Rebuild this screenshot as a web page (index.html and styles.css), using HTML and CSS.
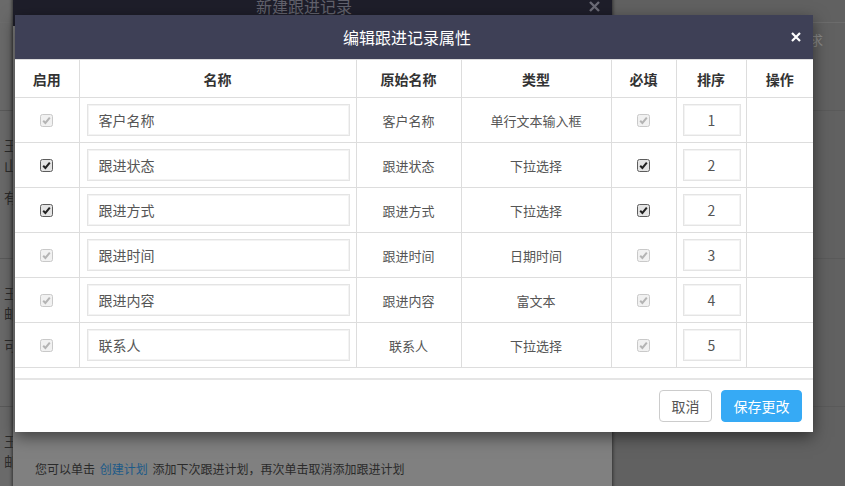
FILE: index.html
```html
<!DOCTYPE html>
<html lang="zh-CN">
<head>
    <meta charset="UTF-8">
    <meta name="viewport" content="width=device-width, initial-scale=1.0">
    <title>编辑跟进记录属性</title>
    <link rel="stylesheet" href="styles.css">
</head>
<body>
  <svg width="0" height="0" class="defs">
    <defs>
      <g id="cb-off">
        <rect x="0.5" y="0.5" width="12" height="12" rx="2" fill="#f1f1f1" stroke="#c9c9c9"/>
        <path d="M3.2 6.8 L5.4 9 L9.8 3.6" fill="none" stroke="#b4b4b4" stroke-width="2"/>
      </g>
      <g id="cb-on">
        <rect x="0.5" y="0.5" width="12" height="12" rx="2" fill="#e4e4e4" stroke="#5d5d5d"/>
        <path d="M3.2 6.8 L5.4 9 L9.8 3.6" fill="none" stroke="#222" stroke-width="2"/>
      </g>
    </defs>
  </svg>

  <!-- page behind the dialogs -->
  <div class="page">
    <div class="page-head"></div>
    <div class="page-form"><span class="hint">需求</span></div>
    <div class="record">
      <p>王总</p>
      <p>山东</p>
      <p class="gap">有意</p>
    </div>
    <div class="record">
      <p>王姐</p>
      <p>邮箱</p>
      <p class="gap">可以</p>
    </div>
    <div class="record">
      <p>王总</p>
      <p>邮箱</p>
    </div>
  </div>

  <!-- first dialog -->
  <div class="bg-modal">
    <div class="bg-modal-header">
      <span class="bg-title">新建跟进记录</span>
      <svg class="x-icon" width="11" height="11" viewBox="0 0 11 11"><path d="M1 1 L10 10 M10 1 L1 10" stroke="#6b6b77" stroke-width="2.4"/></svg>
    </div>
    <div class="bg-modal-body">
      <p class="tip">您可以单击 <a class="tip-link">创建计划</a> 添加下次跟进计划，再次单击取消添加跟进计划</p>
    </div>
  </div>

  <!-- edit dialog -->
  <div class="modal">
    <div class="modal-header">
      <span class="modal-title">编辑跟进记录属性</span>
      <svg class="x-icon" width="10" height="10" viewBox="0 0 10 10"><path d="M1 1 L9 9 M9 1 L1 9" stroke="#fff" stroke-width="2.2"/></svg>
    </div>
    <div class="modal-body">
      <table class="prop-table">
        <colgroup>
          <col style="width:64px"><col style="width:277px"><col style="width:105px"><col style="width:150px"><col style="width:65px"><col style="width:70px"><col>
        </colgroup>
        <thead>
          <tr><th>启用</th><th>名称</th><th>原始名称</th><th>类型</th><th>必填</th><th>排序</th><th>操作</th></tr>
        </thead>
        <tbody>
          <tr>
            <td><svg class="cb" width="13" height="13"><use href="#cb-off"/></svg></td>
            <td class="name-cell"><input class="name-input" type="text" value="客户名称"></td>
            <td>客户名称</td><td>单行文本输入框</td>
            <td><svg class="cb" width="13" height="13"><use href="#cb-off"/></svg></td>
            <td class="sort-cell"><input class="sort-input" type="text" value="1"></td><td></td>
          </tr>
          <tr>
            <td><svg class="cb" width="13" height="13"><use href="#cb-on"/></svg></td>
            <td class="name-cell"><input class="name-input" type="text" value="跟进状态"></td>
            <td>跟进状态</td><td>下拉选择</td>
            <td><svg class="cb" width="13" height="13"><use href="#cb-on"/></svg></td>
            <td class="sort-cell"><input class="sort-input" type="text" value="2"></td><td></td>
          </tr>
          <tr>
            <td><svg class="cb" width="13" height="13"><use href="#cb-on"/></svg></td>
            <td class="name-cell"><input class="name-input" type="text" value="跟进方式"></td>
            <td>跟进方式</td><td>下拉选择</td>
            <td><svg class="cb" width="13" height="13"><use href="#cb-on"/></svg></td>
            <td class="sort-cell"><input class="sort-input" type="text" value="2"></td><td></td>
          </tr>
          <tr>
            <td><svg class="cb" width="13" height="13"><use href="#cb-off"/></svg></td>
            <td class="name-cell"><input class="name-input" type="text" value="跟进时间"></td>
            <td>跟进时间</td><td>日期时间</td>
            <td><svg class="cb" width="13" height="13"><use href="#cb-off"/></svg></td>
            <td class="sort-cell"><input class="sort-input" type="text" value="3"></td><td></td>
          </tr>
          <tr>
            <td><svg class="cb" width="13" height="13"><use href="#cb-off"/></svg></td>
            <td class="name-cell"><input class="name-input" type="text" value="跟进内容"></td>
            <td>跟进内容</td><td>富文本</td>
            <td><svg class="cb" width="13" height="13"><use href="#cb-off"/></svg></td>
            <td class="sort-cell"><input class="sort-input" type="text" value="4"></td><td></td>
          </tr>
          <tr>
            <td><svg class="cb" width="13" height="13"><use href="#cb-off"/></svg></td>
            <td class="name-cell"><input class="name-input" type="text" value="联系人"></td>
            <td>联系人</td><td>下拉选择</td>
            <td><svg class="cb" width="13" height="13"><use href="#cb-off"/></svg></td>
            <td class="sort-cell"><input class="sort-input" type="text" value="5"></td><td></td>
          </tr>
        </tbody>
      </table>
    </div>
    <div class="modal-footer">
      <button class="btn btn-default">取消</button>
      <button class="btn btn-primary">保存更改</button>
    </div>
  </div>
</body>
</html>
```

FILE: styles.css
```css
body {
    margin: 0;
    width: 845px;
    height: 486px;
    overflow: hidden;
    position: relative;
    font-family: "Noto Sans CJK SC", "Noto Sans", sans-serif;
    background: linear-gradient(to right, #6a6a6a 0 13px, #616161 13px);
}
.defs {
    position: absolute;
}

/* page behind */
.page-head {
    height: 22px;
    border-bottom: 1px solid #6c6c6c;
}
.page-form {
    height: 87px;
    display: flex;
    justify-content: flex-end;
    padding-right: 22px;
}
.hint {
    margin-top: 7px;
    font-size: 13px;
    color: #8a8a8a;
}
.record {
    height: 148px;
    padding: 24px 0 0 4px;
    box-sizing: border-box;
    border-top: 1px solid #5a5a5a;
}
.record p {
    margin: 0;
    font-size: 14px;
    line-height: 20px;
    color: #2c2c2c;
    white-space: nowrap;
}
.record p.gap {
    margin-top: 12px;
}

/* first dialog */
.bg-modal {
    position: absolute;
    left: 13px;
    top: -14px;
    width: 599px;
    height: 520px;
    display: flex;
    flex-direction: column;
    background: #808080;
    box-shadow: 0 0 3px 1px #333;
}
.bg-modal-header {
    height: 40px;
    flex: none;
    display: flex;
    align-items: center;
    padding-right: 12px;
    background: #1e1e2a;
}
.bg-title {
    flex: 1;
    text-align: center;
    padding-left: 6px;
    font-size: 16px;
    color: #62626d;
}
.bg-modal-body {
    flex: 1;
    display: flex;
    align-items: flex-end;
    padding: 0 22px 28px;
}
.tip {
    margin: 0;
    font-size: 12px;
    line-height: 18px;
    color: #2a2a2a;
}
.tip-link {
    color: #1c5a88;
    margin: 0 2px;
}

/* edit dialog */
.modal {
    position: absolute;
    left: 15px;
    top: 15px;
    width: 798px;
    background: #fff;
    box-shadow: 0 5px 15px rgba(0, 0, 0, 0.5);
}
.modal-header {
    height: 44px;
    display: flex;
    align-items: center;
    padding-right: 12px;
    background: #3e4056;
}
.modal-title {
    flex: 1;
    text-align: center;
    padding-left: 8px;
    font-size: 16px;
    color: #fff;
}
.x-icon {
    display: block;
}
.modal-body {
    padding-bottom: 10px;
}
.prop-table {
    width: 100%;
    border-collapse: collapse;
    table-layout: fixed;
    border-top: 1px solid #dddddd;
}
.prop-table th,
.prop-table td {
    border: 1px solid #dddddd;
    text-align: center;
    vertical-align: middle;
    padding: 0;
    color: #555;
}
.prop-table tr > :first-child {
    border-left: none;
}
.prop-table tr > :last-child {
    border-right: none;
}
.prop-table th {
    height: 37px;
    font-size: 14px;
    font-weight: bold;
    color: #333;
}
.prop-table td {
    height: 44px;
    font-size: 13px;
}
.cb {
    display: block;
    margin: 0 auto;
}
.name-cell {
    padding: 0 6px 0 7px !important;
}
.sort-cell {
    padding: 0 5px 0 6px !important;
}
input {
    box-sizing: border-box;
    width: 100%;
    height: 32px;
    border: 1px solid #e4e4e4;
    box-shadow: inset 0 0 0 1px #f3f3f3;
    border-radius: 0;
    font-family: inherit;
    font-size: 14px;
    color: #555;
    outline: none;
}
.name-input {
    padding: 0 11px;
}
.sort-input {
    text-align: center;
    padding: 0;
}
.modal-footer {
    display: flex;
    justify-content: flex-end;
    gap: 9px;
    padding: 10px 11px 10px;
    border-top: 2px solid #e5e5e5;
}
.btn {
    height: 32px;
    padding: 0 11.5px;
    border-radius: 4px;
    font-family: inherit;
    font-size: 14px;
    cursor: pointer;
}
.btn-default {
    background: #fff;
    border: 1px solid #cccccc;
    color: #555;
}
.btn-primary {
    background: #36aaf5;
    border: 1px solid #36aaf5;
    color: #fff;
}
```
